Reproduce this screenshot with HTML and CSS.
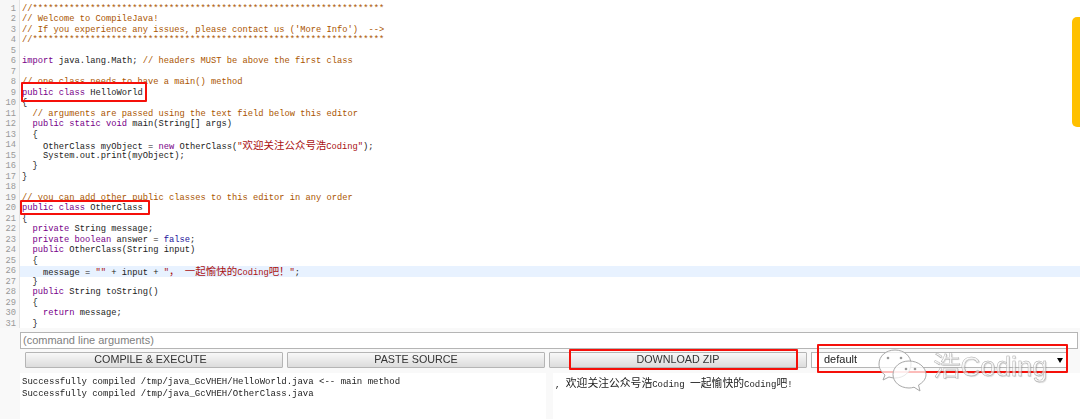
FILE: index.html
```html
<!DOCTYPE html>
<html lang="zh">
<head>
<meta charset="utf-8">
<title>CompileJava</title>
<link rel="stylesheet" href="styles.css">
</head>
<body>
<main class="page">
  <section class="editor">
    <div class="gutter">
      <div>1</div><div>2</div><div>3</div><div>4</div><div>5</div><div>6</div><div>7</div><div>8</div><div>9</div><div>10</div><div>11</div><div>12</div><div>13</div><div>14</div><div>15</div><div>16</div><div>17</div><div>18</div><div>19</div><div>20</div><div>21</div><div>22</div><div>23</div><div>24</div><div>25</div><div>26</div><div>27</div><div>28</div><div>29</div><div>30</div><div>31</div>
    </div>
    <div class="code">
      <div class="line c">//*******************************************************************</div>
      <div class="line c">// Welcome to CompileJava!</div>
      <div class="line c">// If you experience any issues, please contact us ('More Info')  --&gt;</div>
      <div class="line c">//*******************************************************************</div>
      <div class="line"></div>
      <div class="line"><span class="k">import</span> java.lang.Math; <span class="c">// headers MUST be above the first class</span></div>
      <div class="line"></div>
      <div class="line c">// one class needs to have a main() method</div>
      <div class="line"><span class="k">public class</span> HelloWorld</div>
      <div class="line">{</div>
      <div class="line">  <span class="c">// arguments are passed using the text field below this editor</span></div>
      <div class="line">  <span class="k">public static void</span> main(String[] args)</div>
      <div class="line">  {</div>
      <div class="line">    OtherClass myObject = <span class="k">new</span> OtherClass(<span class="s">"<span class="z">欢迎关注公众号浩</span>Coding"</span>);</div>
      <div class="line">    System.out.print(myObject);</div>
      <div class="line">  }</div>
      <div class="line">}</div>
      <div class="line"></div>
      <div class="line c">// you can add other public classes to this editor in any order</div>
      <div class="line"><span class="k">public class</span> OtherClass</div>
      <div class="line">{</div>
      <div class="line">  <span class="k">private</span> String message;</div>
      <div class="line">  <span class="k">private boolean</span> answer = <span class="a">false</span>;</div>
      <div class="line">  <span class="k">public</span> OtherClass(String input)</div>
      <div class="line">  {</div>
      <div class="line active">    message = <span class="s">""</span> + input + <span class="s">"<span class="z">，</span> <span class="z">一起愉快的</span>Coding<span class="z">吧！</span>"</span>;</div>
      <div class="line">  }</div>
      <div class="line">  <span class="k">public</span> String toString()</div>
      <div class="line">  {</div>
      <div class="line">    <span class="k">return</span> message;</div>
      <div class="line">  }</div>
    </div>
    <div class="scrollbar"></div>
  </section>

  <section class="controls">
    <input class="args" type="text" placeholder="(command line arguments)">
    <div class="buttons">
      <button class="btn btn-compile" type="button">COMPILE &amp; EXECUTE</button>
      <button class="btn" type="button">PASTE SOURCE</button>
      <button class="btn" type="button">DOWNLOAD ZIP</button>
      <div class="select-wrap">
        <select class="select"><option>default</option></select>
      </div>
    </div>
    <div class="outputs">
      <pre class="output left">Successfully compiled /tmp/java_GcVHEH/HelloWorld.java &lt;-- main method
Successfully compiled /tmp/java_GcVHEH/OtherClass.java</pre>
      <pre class="output right">, <span class="y">欢迎关注公众号浩</span>Coding <span class="y">一起愉快的</span>Coding<span class="y">吧</span>!</pre>
    </div>
  </section>

  <div class="mark mark-hello"></div>
  <div class="mark mark-other"></div>
  <div class="mark mark-zip"></div>
  <div class="mark mark-select"></div>

  <div class="watermark">
    <svg class="bubbles" width="50" height="44" viewBox="0 0 50 44" aria-hidden="true">
      <path class="bubble" d="M17 1C8 1 1 7 1 15c0 4.500 2.300 8.200 6 11l-2 5 6-3c2 .6 4 1 6 1 9 0 16-6 16-14S26 1 17 1z"/>
      <circle class="eye" cx="10" cy="9" r="1.300"/><circle class="eye" cx="23" cy="9" r="1.300"/>
      <path class="bubble" d="M31 12c-9 0-16 6-16 13.500S22 39 31 39c1.800 0 3.500-.3 5-.8l6 3.800-1.500-6c4.500-2.500 7.500-6 7.500-10.500C48 18 40 12 31 12z"/>
      <circle class="eye" cx="28" cy="20" r="1.300"/><circle class="eye" cx="37" cy="20" r="1.300"/>
    </svg>
    <span class="wm-text">浩Coding</span>
  </div>
</main>
</body>
</html>
```
FILE: styles.css
```css
* { box-sizing: border-box; }
html, body { margin: 0; padding: 0; }
body { background: #f9f9f9; overflow: hidden; }

.page {
  position: relative;
  width: 1080px;
  height: 419px;
  overflow: hidden;
  filter: blur(.3px);
}

.editor {
  position: relative;
  display: flex;
  height: 328px;
  padding-top: 3.5px;
  background: #fff;
  overflow: hidden;
  font: 8.76px/10.5px "Liberation Mono", "Noto Sans CJK SC", monospace;
  color: #222;
}

.gutter {
  flex: 0 0 20px;
  margin-top: -3.5px;
  padding: 3.5px 3px 0 0;
  background: #f7f7f7;
  border-right: 1px solid #e4e4e4;
  color: #999;
  text-align: right;
}
.gutter div { height: 10.5px; }

.code { flex: 1; min-width: 0; }
.line {
  height: 10.5px;
  padding-left: 2px;
  white-space: pre;
}
.active { background: #e8f2ff; }
.c { color: #a50; }
.k { color: #708; }
.a { color: #219; }
.s { color: #a11; }
.z { font: 10.48px/10.5px "Noto Sans CJK SC", sans-serif; }

.scrollbar {
  position: absolute;
  top: 17px;
  right: 0;
  width: 8px;
  height: 110px;
  background: #ffc000;
  border-radius: 5px 0 0 5px;
}

.controls {
  display: flex;
  flex-direction: column;
  padding-top: 4px;
}

.args {
  display: block;
  width: 1058px;
  height: 16.5px;
  margin-left: 20px;
  padding: 0 2px;
  border: 1px solid #b5b5b5;
  background: #fff;
  font: 11px "Liberation Sans", Arial, sans-serif;
}
.args::placeholder { color: #808080; opacity: 1; }

.buttons {
  display: grid;
  grid-template-columns: repeat(3, 258px) 1fr;
  column-gap: 4px;
  height: 16.5px;
  margin: 3px 13px 0 25px;
}
.btn {
  margin: 0;
  padding: 0 0 2px;
  border: 1px solid #b5b5b5;
  border-radius: 1px;
  background: linear-gradient(#f8f8f8, #dcdcdc);
  color: #333;
  font: 10.75px "Liberation Sans", Arial, sans-serif;
}
.btn-compile { padding-right: 7px; }

.select-wrap { position: relative; }
.select-wrap::after {
  content: "";
  position: absolute;
  right: 4px;
  top: 6px;
  border-style: solid;
  border-width: 5px 3px 0;
  border-color: #000 transparent transparent;
}
.select {
  appearance: none;
  display: block;
  width: 100%;
  height: 100%;
  padding: 0 0 1px 12px;
  border: 1px solid #b5b5b5;
  border-radius: 0;
  background: #fff;
  color: #222;
  font: 11px "Liberation Sans", Arial, sans-serif;
}

.outputs {
  display: grid;
  grid-template-columns: 526px 1fr;
  column-gap: 7px;
  height: 50px;
  margin: 4.5px 0 0 20px;
}
.output {
  margin: 0;
  padding: 3px 2px 0;
  background: #fff;
  color: #222;
  font: 9px/12.5px "Liberation Mono", "Noto Sans CJK SC", monospace;
  white-space: pre;
}
.y { font: 10.8px/12.5px "Noto Sans CJK SC", sans-serif; }

.mark {
  position: absolute;
  border: 2px solid #f5100a;
  border-radius: 1px;
}
.mark-hello { left: 21px; top: 82px; width: 126px; height: 20px; }
.mark-other { left: 20px; top: 200px; width: 130px; height: 15px; }
.mark-zip { left: 569px; top: 349px; width: 229px; height: 21px; }
.mark-select { left: 817px; top: 344px; width: 251px; height: 29px; }

.watermark {
  position: absolute;
  left: 878px;
  top: 349px;
  display: flex;
  align-items: flex-start;
  gap: 5px;
}
.bubbles { display: block; }
.bubble { fill: rgba(255, 255, 255, .72); stroke: #a8a8a8; stroke-width: 1; }
.eye { fill: #9a9a9a; }
.wm-text {
  margin-top: 1px;
  font: 27.5px/34px "Liberation Sans", "Noto Sans CJK SC", sans-serif;
  color: rgba(255, 255, 255, .6);
  -webkit-text-stroke: .4px #a0a0a0;
  text-shadow: 1px 1px 1px rgba(0, 0, 0, .15);
}
```
